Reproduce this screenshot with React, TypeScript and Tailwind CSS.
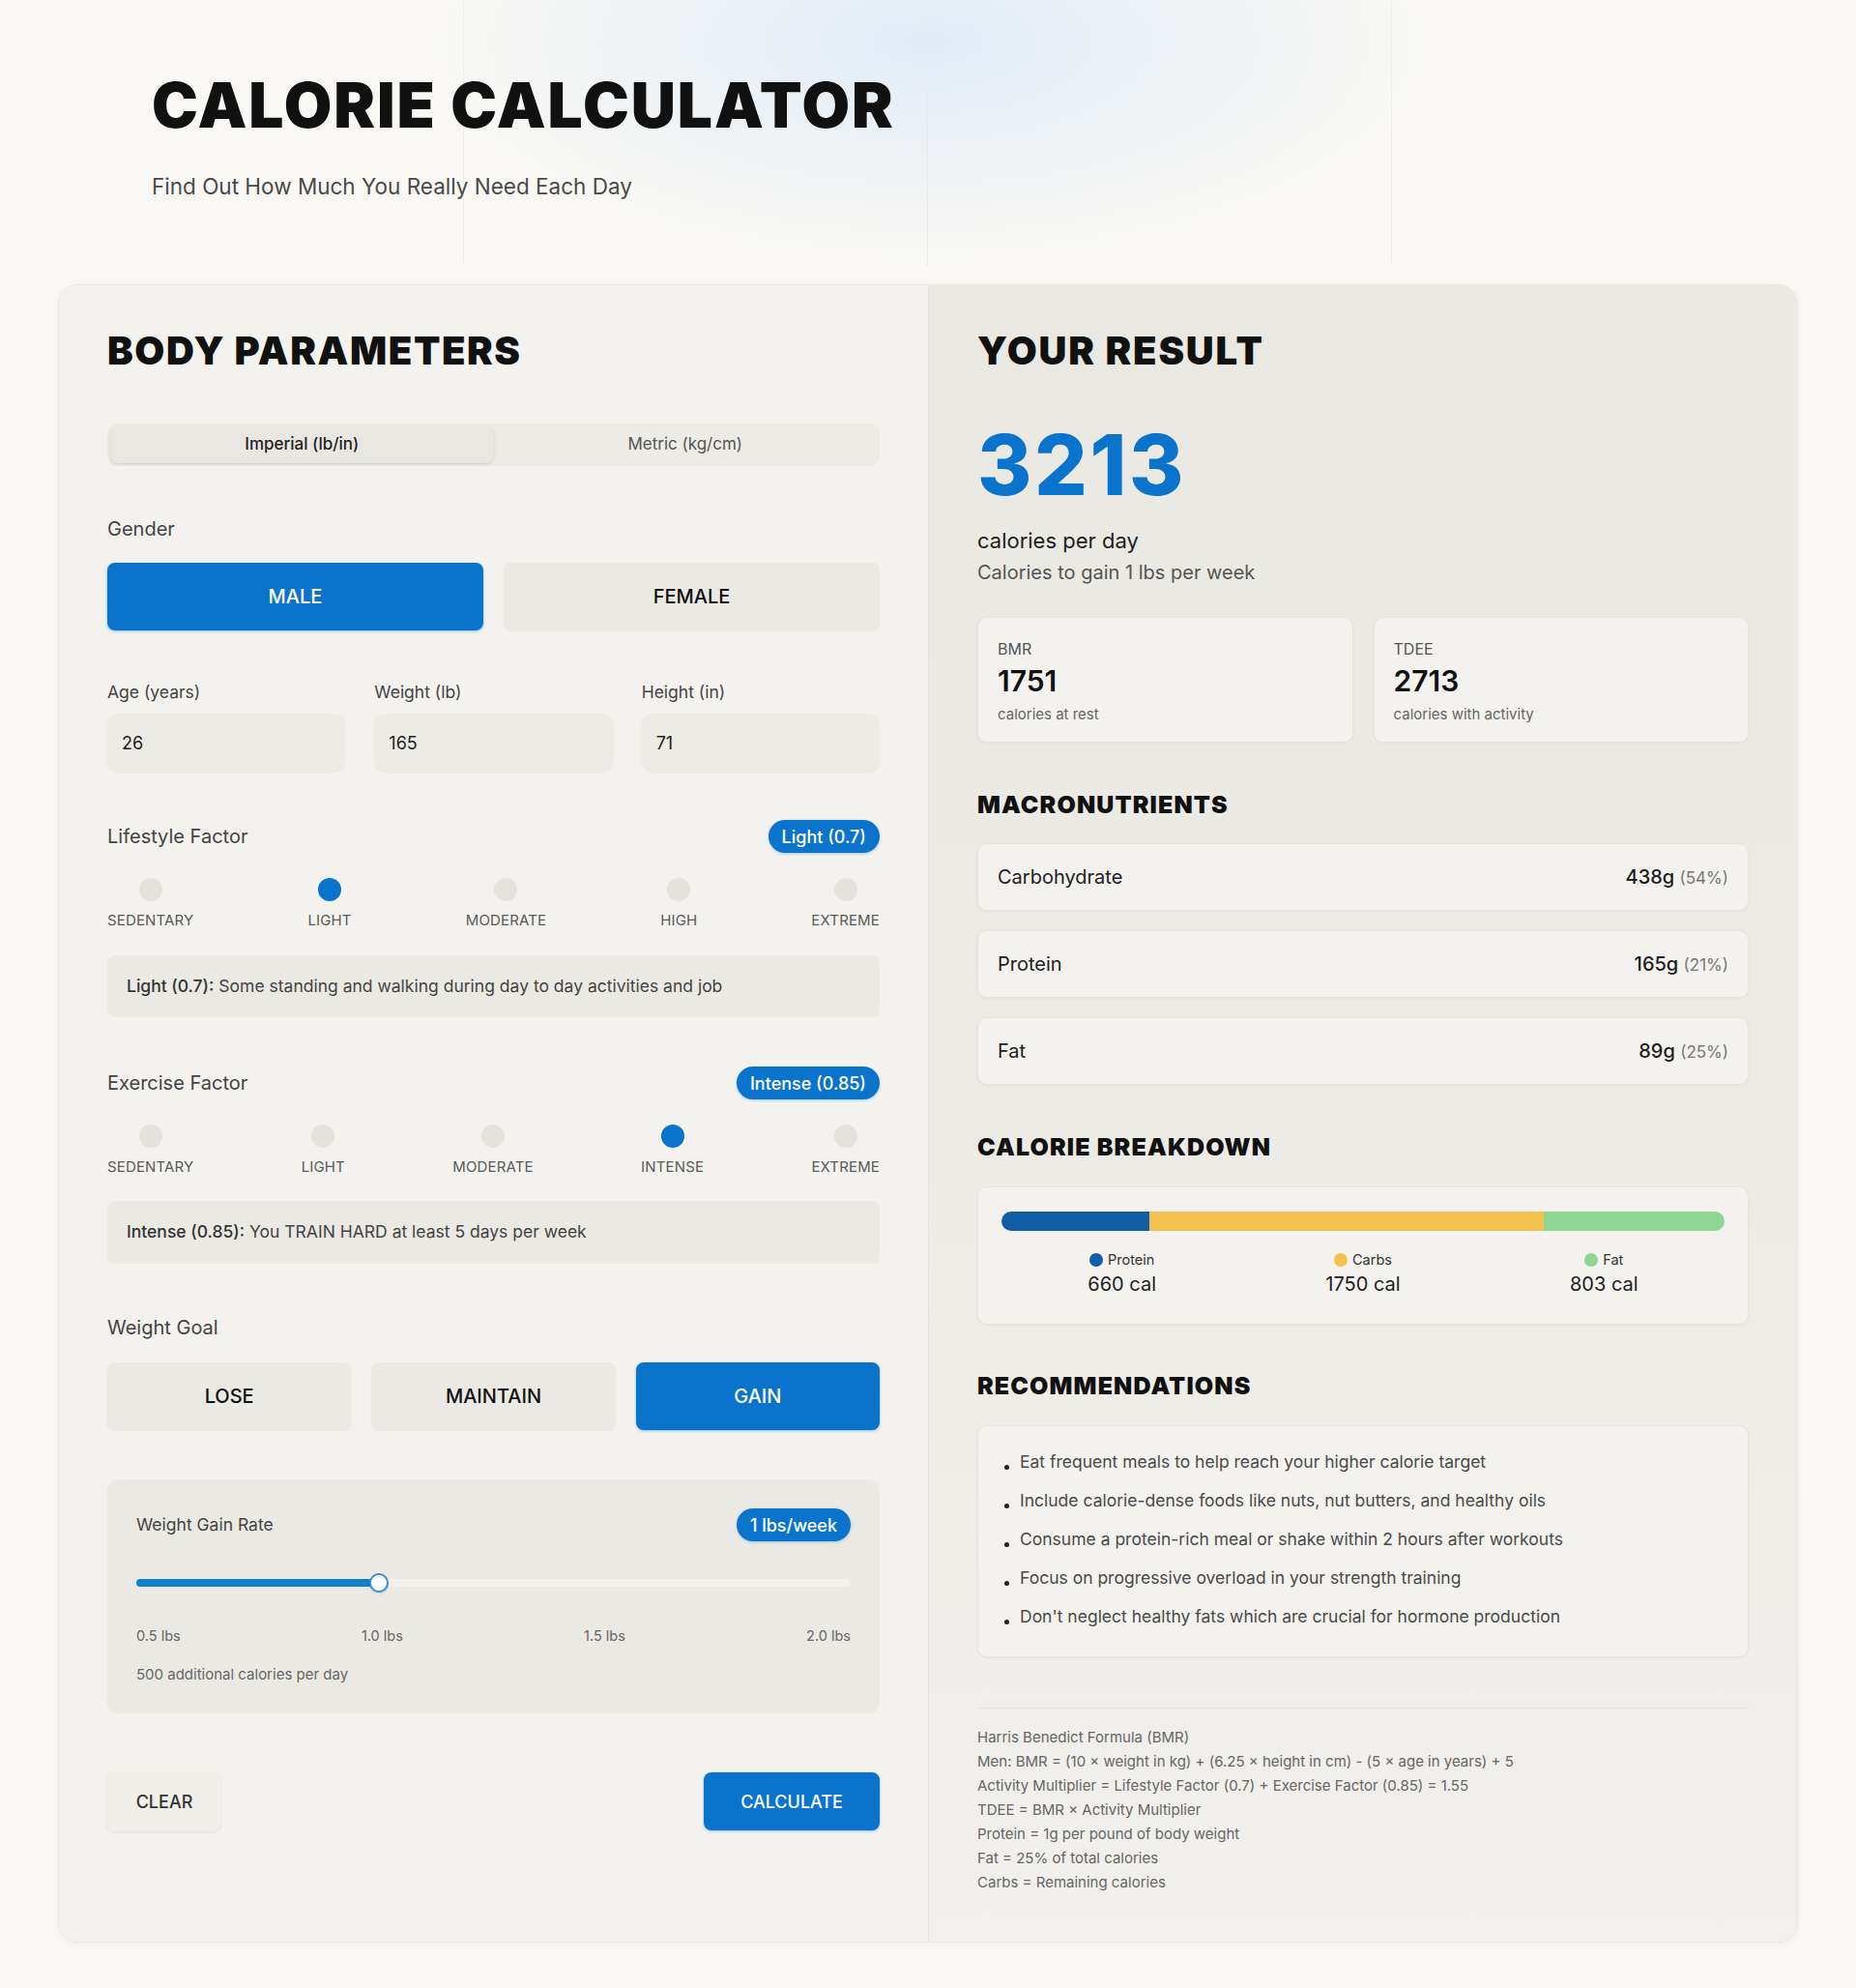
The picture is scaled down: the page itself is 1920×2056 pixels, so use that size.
import React from 'react';

const lifestyle = ['Sedentary', 'Light', 'Moderate', 'High', 'Extreme'];
const exercise = ['Sedentary', 'Light', 'Moderate', 'Intense', 'Extreme'];

const macros = [
  { name: 'Carbohydrate', grams: '438g', pct: '(54%)' },
  { name: 'Protein', grams: '165g', pct: '(21%)' },
  { name: 'Fat', grams: '89g', pct: '(25%)' },
];

const tips = [
  'Eat frequent meals to help reach your higher calorie target',
  'Include calorie-dense foods like nuts, nut butters, and healthy oils',
  'Consume a protein-rich meal or shake within 2 hours after workouts',
  'Focus on progressive overload in your strength training',
  "Don't neglect healthy fats which are crucial for hormone production",
];

const formula = [
  'Harris Benedict Formula (BMR)',
  'Men: BMR = (10 × weight in kg) + (6.25 × height in cm) - (5 × age in years) + 5',
  'Activity Multiplier = Lifestyle Factor (0.7) + Exercise Factor (0.85) = 1.55',
  'TDEE = BMR × Activity Multiplier',
  'Protein = 1g per pound of body weight',
  'Fat = 25% of total calories',
  'Carbs = Remaining calories',
];

function Badge({ children }: { children: React.ReactNode }) {
  return (
    <span className="inline-flex h-[34px] items-center rounded-full bg-[#0a74cc] px-[14px] text-[18px] font-medium text-white shadow-[0_1px_3px_rgba(10,116,204,0.35)]">
      {children}
    </span>
  );
}

function FactorScale({ options, active }: { options: string[]; active: number }) {
  return (
    <div className="mt-[26px] flex justify-between">
      {options.map((o, i) => (
        <div key={o} className="flex flex-col items-center">
          <span
            className={
              i === active
                ? 'h-6 w-6 rounded-full bg-[#0a74cc]'
                : 'h-6 w-6 rounded-full bg-[#e4e2dc]'
            }
          />
          <span className="mt-[10px] text-[15px] uppercase leading-5 tracking-[0.01em] text-[#5a5a5a]">
            {o}
          </span>
        </div>
      ))}
    </div>
  );
}

function ChoiceButton({ label, active }: { label: string; active?: boolean }) {
  return (
    <button
      className={
        active
          ? 'flex h-[70px] items-center justify-center rounded-[8px] bg-[#0a74cc] text-[20px] font-medium text-white shadow-[0_1px_3px_rgba(10,116,204,0.4)]'
          : 'flex h-[70px] items-center justify-center rounded-[8px] bg-[#ebe9e4] text-[20px] font-medium text-[#111] shadow-[0_1px_2px_rgba(0,0,0,0.05)]'
      }
    >
      {label}
    </button>
  );
}

function NumberField({ label, value }: { label: string; value: string }) {
  return (
    <div className="flex flex-col">
      <span className="text-[17.5px] leading-6 text-[#444]">{label}</span>
      <div className="mt-[10px] flex h-[60px] items-center rounded-[12px] bg-[#ecebe6] px-[15px] text-[18px] text-[#222] shadow-[0_1px_3px_rgba(0,0,0,0.06)]">
        {value}
      </div>
    </div>
  );
}

function SectionTitle({ children }: { children: React.ReactNode }) {
  return (
    <h3 className="text-[25px] font-black uppercase leading-8 tracking-[0.045em] text-[#111]">
      {children}
    </h3>
  );
}

export default function App() {
  return (
    <div className="min-h-[2056px] bg-[#f9f8f4] pb-[52px] font-['Inter',sans-serif] text-[#222]">
      {/* Header */}
      <header className="relative h-[294px] overflow-hidden">
        <div className="absolute inset-0 bg-[radial-gradient(ellipse_700px_300px_at_50%_15%,rgba(220,232,246,0.8),transparent_75%)]" />
        <div className="absolute inset-x-0 top-0 bottom-[20px] grid grid-cols-4">
          <div className="border-r border-[#efeee9]" />
          <div className="border-r border-[#ebeae6]" />
          <div className="border-r border-[#efeee9]" />
          <div />
        </div>
        <div className="relative pl-[157px] pt-[77px]">
          <h1 className="text-[64px] font-black uppercase leading-none tracking-[0.03em] text-[#111]">
            Calorie Calculator
          </h1>
          <p className="mt-[37px] text-[22.5px] leading-[30px] text-[#4a4a4a]">
            Find Out How Much You Really Need Each Day
          </p>
        </div>
      </header>

      {/* Card */}
      <main className="mx-[60px] grid grid-cols-2 overflow-hidden rounded-[20px] border border-[#e9e7e2] shadow-[0_2px_10px_rgba(0,0,0,0.04)]">
        {/* Body parameters */}
        <section className="bg-[#f3f2ee] px-[50px] pt-[44px] pb-[60px]">
          <h2 className="text-[40px] font-black uppercase leading-[48px] tracking-[0.04em] text-[#111]">
            Body Parameters
          </h2>

          <div className="mt-[51px] grid h-[44px] grid-cols-2 rounded-[10px] bg-[#ecebe6] p-[3px]">
            <div className="flex items-center justify-center rounded-[8px] bg-[#e9e7e1] text-[17px] font-medium text-[#222] shadow-[0_1px_3px_rgba(0,0,0,0.12)]">
              Imperial (lb/in)
            </div>
            <div className="flex items-center justify-center text-[17px] text-[#555]">
              Metric (kg/cm)
            </div>
          </div>

          <div className="mt-[52px] text-[20px] leading-[26px] text-[#444]">Gender</div>
          <div className="mt-[22px] grid grid-cols-2 gap-[21px]">
            <ChoiceButton label="MALE" active />
            <ChoiceButton label="FEMALE" />
          </div>

          <div className="mt-[52px] grid grid-cols-3 gap-[30px]">
            <NumberField label="Age (years)" value="26" />
            <NumberField label="Weight (lb)" value="165" />
            <NumberField label="Height (in)" value="71" />
          </div>

          <div className="mt-[50px] flex items-center justify-between">
            <span className="text-[20px] text-[#444]">Lifestyle Factor</span>
            <Badge>Light (0.7)</Badge>
          </div>
          <FactorScale options={lifestyle} active={1} />
          <div className="mt-[26px] flex h-[64px] items-center rounded-[8px] bg-[#ebe9e4] px-5 text-[17.5px] text-[#444]">
            <span className="font-medium text-[#333]">Light (0.7):</span>
            <span className="ml-[5px]">Some standing and walking during day to day activities and job</span>
          </div>

          <div className="mt-[51px] flex items-center justify-between">
            <span className="text-[20px] text-[#444]">Exercise Factor</span>
            <Badge>Intense (0.85)</Badge>
          </div>
          <FactorScale options={exercise} active={3} />
          <div className="mt-[25px] flex h-[65px] items-center rounded-[8px] bg-[#ebe9e4] px-5 text-[17.5px] text-[#444]">
            <span className="font-medium text-[#333]">Intense (0.85):</span>
            <span className="ml-[5px]">You TRAIN HARD at least 5 days per week</span>
          </div>

          <div className="mt-[53px] text-[20px] leading-[26px] text-[#444]">Weight Goal</div>
          <div className="mt-[23px] grid grid-cols-3 gap-[21px]">
            <ChoiceButton label="LOSE" />
            <ChoiceButton label="MAINTAIN" />
            <ChoiceButton label="GAIN" active />
          </div>

          <div className="mt-[51px] rounded-[12px] bg-[#ebe9e4] px-[30px] pt-[30px] pb-[30px]">
            <div className="flex items-center justify-between">
              <span className="text-[17.5px] text-[#444]">Weight Gain Rate</span>
              <Badge>1 lbs/week</Badge>
            </div>
            <div className="relative mt-[33px] flex h-5 items-center">
              <div className="h-2 w-full rounded-full bg-[#f2f1ed]">
                <div className="h-2 w-[34%] rounded-full bg-[#0e80d0]" />
              </div>
              <span className="absolute left-[calc(34%-10px)] top-0 h-5 w-5 rounded-full border-2 border-[#3a8fcf] bg-white shadow-[0_1px_2px_rgba(0,0,0,0.15)]" />
            </div>
            <div className="mt-[35px] flex justify-between text-[14.5px] leading-5 text-[#666]">
              <span>0.5 lbs</span>
              <span>1.0 lbs</span>
              <span>1.5 lbs</span>
              <span>2.0 lbs</span>
            </div>
            <p className="mt-5 text-[15px] leading-5 text-[#666]">500 additional calories per day</p>
          </div>

          <div className="mt-[60px] flex items-center justify-between">
            <button className="flex h-[62px] w-[118px] items-center justify-center rounded-[8px] bg-[#efeee9] text-[18px] font-medium text-[#333] shadow-[0_1px_3px_rgba(0,0,0,0.08)]">
              CLEAR
            </button>
            <button className="flex h-[60px] w-[182px] items-center justify-center rounded-[8px] bg-[#0a74cc] text-[18px] font-medium text-white shadow-[0_1px_3px_rgba(10,116,204,0.4)]">
              CALCULATE
            </button>
          </div>
        </section>

        {/* Result */}
        <section className="border-l border-[#e4e2dd] bg-[linear-gradient(180deg,#eae8e3_0%,#ecebe6_55%,#f1f0ec_100%)] px-[50px] pt-[44px] pb-[49px]">
          <h2 className="text-[40px] font-black uppercase leading-[48px] tracking-[0.045em] text-[#111]">
            Your Result
          </h2>
          <div className="mt-[51px] text-[86px] font-extrabold leading-none tracking-[0.03em] text-[#0a74cc]">
            3213
          </div>
          <div className="mt-5 text-[22px] leading-[30px] text-[#1e1e1e]">calories per day</div>
          <div className="mt-1 text-[20px] leading-7 text-[#555]">Calories to gain 1 lbs per week</div>

          <div className="mt-[32px] grid grid-cols-2 gap-[21px]">
            <div className="h-[130px] rounded-[10px] border border-[#e6e4df] bg-[#f3f2ee] px-5 pt-[21px] shadow-[0_1px_3px_rgba(0,0,0,0.04)]">
              <div className="text-[16px] leading-[22px] text-[#555]">BMR</div>
              <div className="mt-1 text-[30px] font-semibold leading-9 text-[#111]">1751</div>
              <div className="mt-[7px] text-[15px] leading-5 text-[#666]">calories at rest</div>
            </div>
            <div className="h-[130px] rounded-[10px] border border-[#e6e4df] bg-[#f3f2ee] px-5 pt-[21px] shadow-[0_1px_3px_rgba(0,0,0,0.04)]">
              <div className="text-[16px] leading-[22px] text-[#555]">TDEE</div>
              <div className="mt-1 text-[30px] font-semibold leading-9 text-[#111]">2713</div>
              <div className="mt-[7px] text-[15px] leading-5 text-[#666]">calories with activity</div>
            </div>
          </div>

          <div className="mt-[48px]">
            <SectionTitle>Macronutrients</SectionTitle>
          </div>
          <div className="mt-[24px] flex flex-col gap-5">
            {macros.map((m) => (
              <div
                key={m.name}
                className="flex h-[70px] items-center justify-between rounded-[10px] border border-[#e6e4df] bg-[#f3f2ee] px-5 shadow-[0_1px_3px_rgba(0,0,0,0.04)]"
              >
                <span className="text-[20px] text-[#222]">{m.name}</span>
                <span className="text-[20px] font-medium text-[#1e1e1e]">
                  {m.grams} <span className="text-[17px] font-normal text-[#777]">{m.pct}</span>
                </span>
              </div>
            ))}
          </div>

          <div className="mt-[48px]">
            <SectionTitle>Calorie Breakdown</SectionTitle>
          </div>
          <div className="mt-[25px] rounded-[10px] border border-[#e6e4df] bg-[#f3f2ee] px-6 pt-[25px] pb-[27px] shadow-[0_1px_3px_rgba(0,0,0,0.04)]">
            <div className="flex h-5 overflow-hidden rounded-full">
              <div className="h-full w-[20.5%] bg-[#115ea7]" />
              <div className="h-full w-[54.5%] bg-[#f2c14e]" />
              <div className="h-full flex-1 bg-[#8fd594]" />
            </div>
            <div className="mt-5 grid grid-cols-3 text-center">
              {[
                { label: 'Protein', cal: '660 cal', dot: 'bg-[#115ea7]' },
                { label: 'Carbs', cal: '1750 cal', dot: 'bg-[#f2c14e]' },
                { label: 'Fat', cal: '803 cal', dot: 'bg-[#8fd594]' },
              ].map((l) => (
                <div key={l.label} className="flex flex-col items-center">
                  <div className="flex items-center gap-[5px] text-[14.5px] leading-5 text-[#333]">
                    <span className={`h-[14px] w-[14px] rounded-full ${l.dot}`} />
                    {l.label}
                  </div>
                  <div className="mt-px text-[20px] leading-7 text-[#1e1e1e]">{l.cal}</div>
                </div>
              ))}
            </div>
          </div>

          <div className="mt-[47px]">
            <SectionTitle>Recommendations</SectionTitle>
          </div>
          <ul className="mt-[25px] flex flex-col gap-[14px] rounded-[10px] border border-[#e6e4df] bg-[#f3f2ee] pl-[27px] pr-5 pt-[24px] pb-[28px] shadow-[0_1px_3px_rgba(0,0,0,0.04)]">
            {tips.map((t) => (
              <li key={t} className="flex items-end gap-[11px] text-[17.5px] leading-[26px] text-[#4a4a4a]">
                <span className="mb-[5px] h-[5px] w-[5px] shrink-0 rounded-full bg-[#222]" />
                {t}
              </li>
            ))}
          </ul>

          <div className="mt-[52px] h-px bg-[#e3e1dc]" />
          <div className="mt-[17px] text-[15px] leading-[25px] text-[#666]">
            {formula.map((f) => (
              <div key={f}>{f}</div>
            ))}
          </div>
        </section>
      </main>
    </div>
  );
}
